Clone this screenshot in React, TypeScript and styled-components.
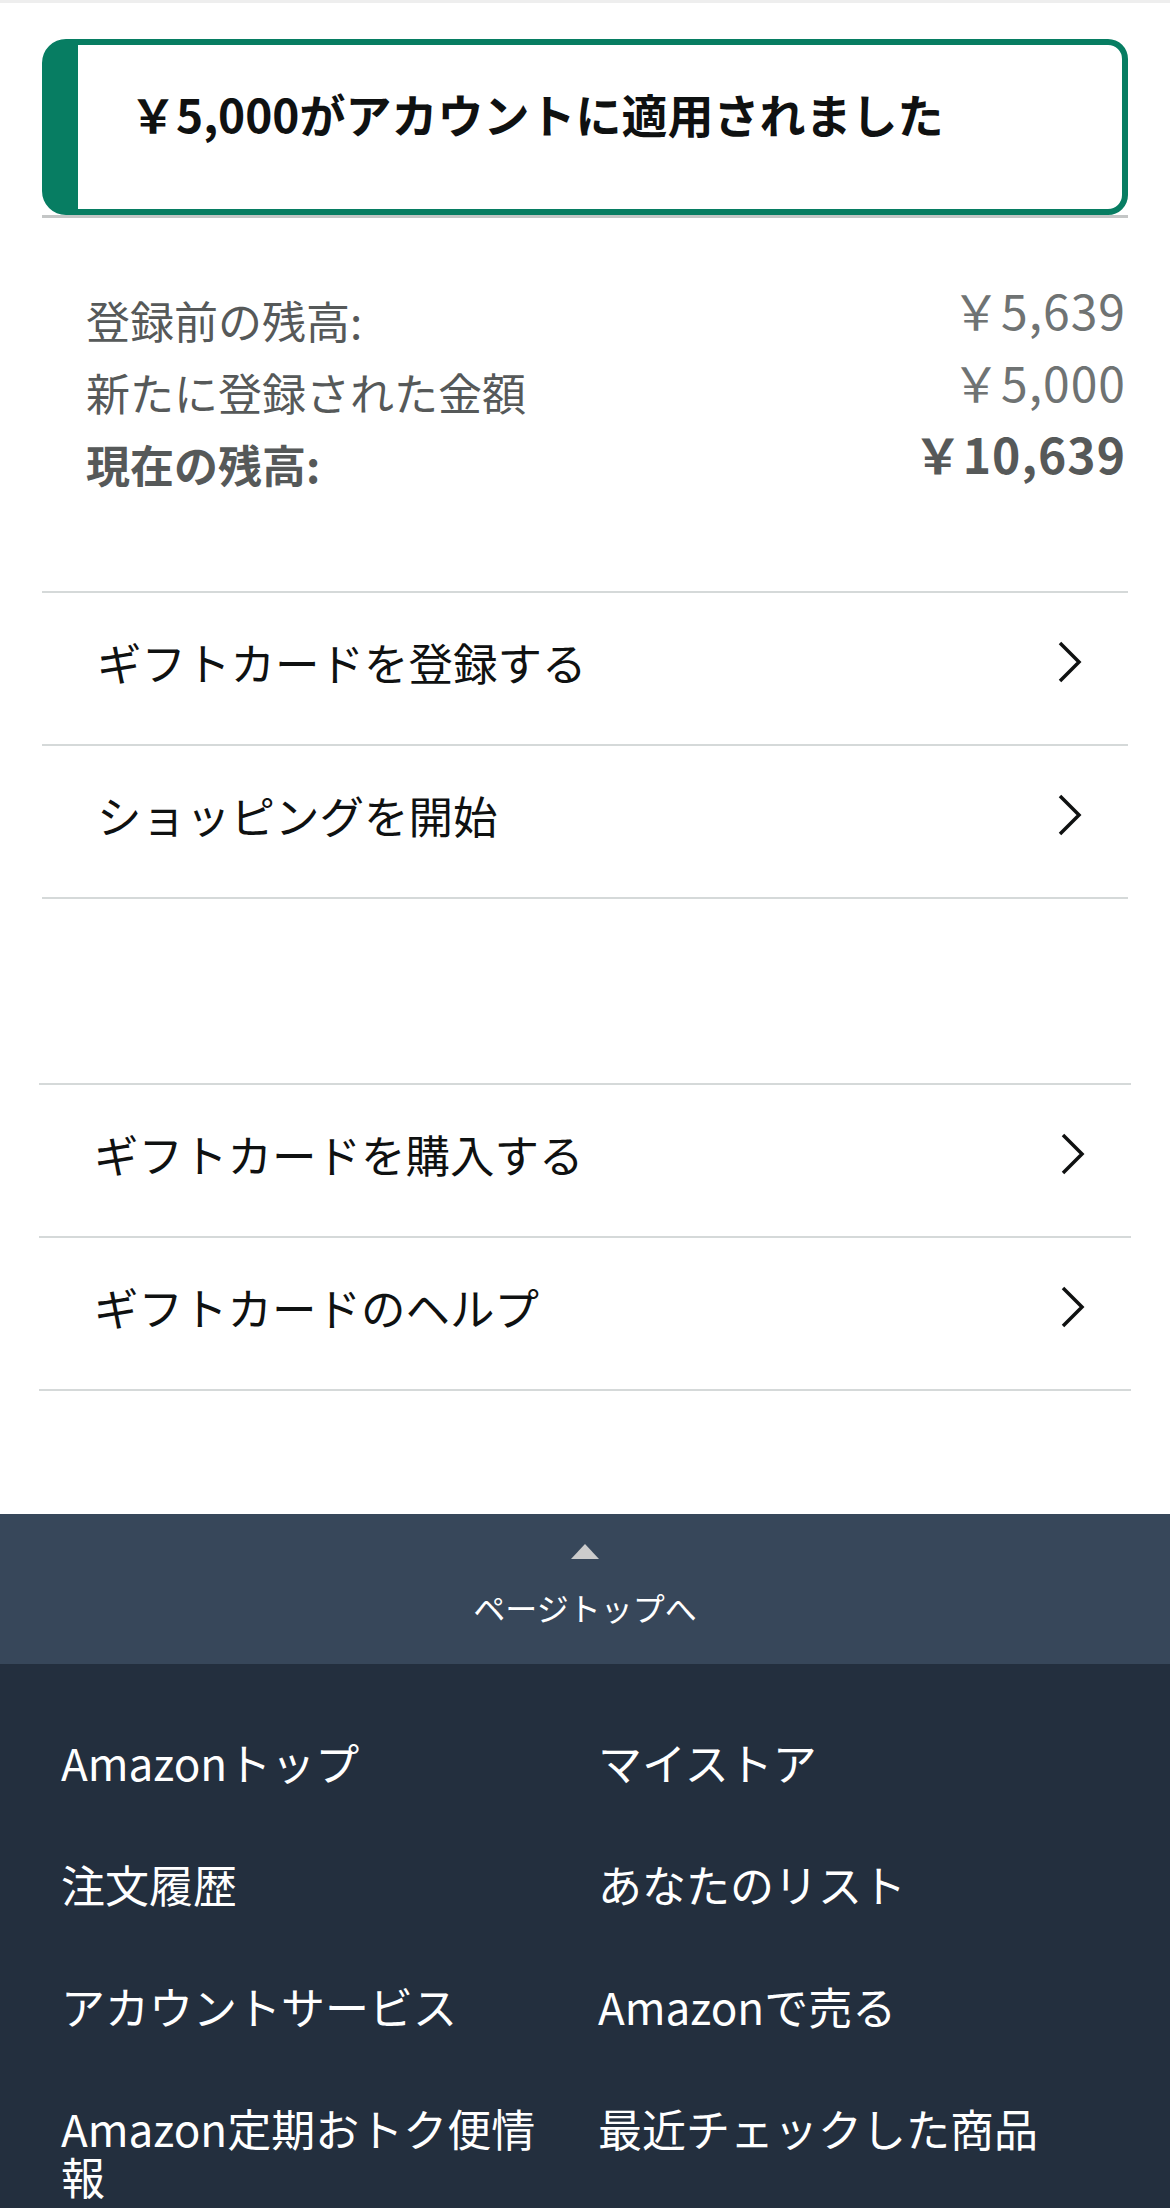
import React from "react";
import styled, { createGlobalStyle } from "styled-components";

const GlobalStyle = createGlobalStyle`
  body {
    margin: 0;
    background: #ffffff;
    font-family: "Noto Sans CJK JP", "Noto Sans", sans-serif;
    color: #0f1111;
  }
`;

const TopStrip = styled.div`
  height: 3px;
  background: #eeeeee;
`;

const Main = styled.main`
  padding: 36px 42px 0;
`;

const AlertWrap = styled.div`
  border-bottom: 3px solid #c4c6c6;
`;

const Alert = styled.div`
  border: 6px solid #077d62;
  border-left-width: 36px;
  border-radius: 24px 20px 20px 24px;
  padding: 40px 30px 67px 52px;
`;

const AlertText = styled.h4`
  margin: 0;
  font-size: 46px;
  line-height: 57px;
  font-weight: 700;
  color: #0f1111;
`;

const Balance = styled.div`
  padding: 66px 2px 0 44px;
`;

const BalanceRow = styled.div`
  display: flex;
  justify-content: space-between;
  align-items: flex-start;
  height: 72px;
`;

const Label = styled.span<{ $strong?: boolean }>`
  padding-top: 11px;
  font-size: 44px;
  line-height: 50px;
  color: #565959;
  font-weight: ${(p) => (p.$strong ? 700 : 400)};
`;

const Amount = styled.span<{ $strong?: boolean }>`
  font-size: 48px;
  line-height: 50px;
  letter-spacing: 1px;
  color: ${(p) => (p.$strong ? "#565959" : "#6f7373")};
  font-weight: ${(p) => (p.$strong ? 700 : 400)};
`;

const LinkList = styled.ul<{ $wide?: boolean; $top: number }>`
  list-style: none;
  margin: ${(p) => p.$top}px ${(p) => (p.$wide ? -3 : 0)}px 0;
  padding: 0;
  border-top: 2px solid #d5d9d9;
`;

const LinkItem = styled.li`
  display: flex;
  align-items: center;
  justify-content: space-between;
  height: 137px;
  padding: 0 45px 14px 55px;
  border-bottom: 2px solid #d5d9d9;
  font-size: 44.5px;
  color: #0f1111;
`;

const Chevron = () => (
  <svg width="26" height="44" viewBox="0 0 26 44">
    <polyline
      points="3,3 22,22 3,41"
      fill="none"
      stroke="#0f1111"
      strokeWidth="3.5"
    />
  </svg>
);

const BackToTop = styled.div`
  margin-top: 123px;
  height: 150px;
  background: #37475a;
  display: flex;
  flex-direction: column;
  align-items: center;
  color: #ffffff;
`;

const Arrow = styled.div`
  margin-top: 30px;
  width: 0;
  height: 0;
  border-left: 14px solid transparent;
  border-right: 14px solid transparent;
  border-bottom: 15px solid #cccccc;
`;

const BackText = styled.span`
  margin-top: 26px;
  font-size: 32px;
  line-height: 44px;
`;

const Footer = styled.footer`
  background: #232f3e;
  padding: 74px 35px 80px 61px;
  display: grid;
  grid-template-columns: 1fr 1fr;
  row-gap: 74px;
`;

const FooterLink = styled.a`
  padding-right: 50px;
  font-size: 44px;
  line-height: 48px;
  color: #ffffff;
  text-decoration: none;
`;

const topLinks = ["ギフトカードを登録する", "ショッピングを開始"];
const bottomLinks = ["ギフトカードを購入する", "ギフトカードのヘルプ"];
const footerLinks = [
  "Amazonトップ",
  "マイストア",
  "注文履歴",
  "あなたのリスト",
  "アカウントサービス",
  "Amazonで売る",
  "Amazon定期おトク便情報",
  "最近チェックした商品",
];

const App: React.FC = () => {
  return (
    <>
      <GlobalStyle />
      <TopStrip />
      <Main>
        <AlertWrap>
          <Alert>
            <AlertText>￥5,000がアカウントに適用されました</AlertText>
          </Alert>
        </AlertWrap>

        <Balance>
          <BalanceRow>
            <Label>登録前の残高:</Label>
            <Amount>￥5,639</Amount>
          </BalanceRow>
          <BalanceRow>
            <Label>新たに登録された金額</Label>
            <Amount>￥5,000</Amount>
          </BalanceRow>
          <BalanceRow>
            <Label $strong>現在の残高:</Label>
            <Amount $strong>￥10,639</Amount>
          </BalanceRow>
        </Balance>

        <LinkList $top={91}>
          {topLinks.map((text) => (
            <LinkItem key={text}>
              <span>{text}</span>
              <Chevron />
            </LinkItem>
          ))}
        </LinkList>

        <LinkList $top={184} $wide>
          {bottomLinks.map((text) => (
            <LinkItem key={text}>
              <span>{text}</span>
              <Chevron />
            </LinkItem>
          ))}
        </LinkList>
      </Main>

      <BackToTop>
        <Arrow />
        <BackText>ページトップへ</BackText>
      </BackToTop>

      <Footer>
        {footerLinks.map((text) => (
          <FooterLink key={text} href="#">
            {text}
          </FooterLink>
        ))}
      </Footer>
    </>
  );
};

export default App;
